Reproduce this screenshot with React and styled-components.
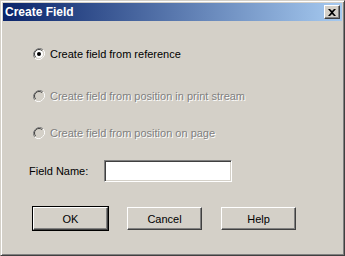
import React from 'react';
import styled, { createGlobalStyle } from 'styled-components';

const GlobalStyle = createGlobalStyle`
  html, body { margin: 0; padding: 0; background: #d4d0c8; }
  body { font-family: "Liberation Sans", Arial, sans-serif; font-size: 11px; }
`;

const Window = styled.div`
  box-sizing: border-box;
  width: 345px;
  height: 256px;
  background: #d4d0c8;
  border-top: 1px solid #d4d0c8;
  border-left: 1px solid #d4d0c8;
  border-right: 1px solid #404040;
  border-bottom: 1px solid #404040;
  box-shadow: inset 1px 1px 0 #ffffff, inset -1px -1px 0 #808080;
  padding: 2px;
  display: flex;
  flex-direction: column;
`;

const TitleBar = styled.div`
  height: 18px;
  background: linear-gradient(to right, #0a246a, #a6caf0);
  display: flex;
  align-items: center;
  justify-content: space-between;
  padding: 0 2px 0 2px;
`;

const Title = styled.span`
  color: #ffffff;
  font-weight: bold;
  font-size: 12px;
`;

const CloseButton = styled.div`
  box-sizing: border-box;
  width: 16px;
  height: 14px;
  background: #d4d0c8;
  border-top: 1px solid #ffffff;
  border-left: 1px solid #ffffff;
  border-right: 1px solid #404040;
  border-bottom: 1px solid #404040;
  box-shadow: inset -1px -1px 0 #808080;
  display: flex;
  align-items: center;
  justify-content: center;
`;

const Body = styled.div`
  display: flex;
  flex-direction: column;
  padding: 0 0 0 30px;
`;

const RadioRow = styled.label`
  display: flex;
  align-items: center;
  gap: 5px;
  height: 14px;
  margin-top: ${p => p.$top}px;
  color: ${p => (p.$disabled ? '#808080' : '#000000')};
  text-shadow: ${p => (p.$disabled ? '1px 1px 0 #ffffff' : 'none')};
`;

const FieldRow = styled.div`
  display: flex;
  align-items: center;
  margin-top: 20px;
`;

const FieldLabel = styled.span`
  width: 75px;
  margin-left: -4px;
`;

const TextInput = styled.div`
  box-sizing: border-box;
  width: 128px;
  height: 22px;
  background: #ffffff;
  border-top: 1px solid #808080;
  border-left: 1px solid #808080;
  border-right: 1px solid #ffffff;
  border-bottom: 1px solid #ffffff;
  box-shadow: inset 1px 1px 0 #404040, inset -1px -1px 0 #d4d0c8;
`;

const ButtonRow = styled.div`
  display: flex;
  gap: 19px;
  margin-top: 25px;
`;

const Button = styled.div`
  box-sizing: border-box;
  width: 75px;
  height: 23px;
  display: flex;
  align-items: center;
  justify-content: center;
  background: #d4d0c8;
  border-top: 1px solid #ffffff;
  border-left: 1px solid #ffffff;
  border-right: 1px solid #404040;
  border-bottom: 1px solid #404040;
  box-shadow: inset -1px -1px 0 #808080;
  ${p => p.$default && `
    outline: 1px solid #000000;
  `}
`;

function Radio({ checked, disabled }) {
  return (
    <svg width="12" height="12" viewBox="0 0 12 12">
      <path d="M10.2 1.8 A6 6 0 0 0 1.8 10.2" fill="none" stroke="#808080" strokeWidth="1" />
      <path d="M1.8 10.2 A6 6 0 0 0 10.2 1.8" fill="none" stroke="#ffffff" strokeWidth="1" />
      <circle cx="6" cy="6" r="4.5" fill={disabled ? '#d4d0c8' : '#ffffff'} />
      <path d="M9.2 2.8 A4.5 4.5 0 0 0 2.8 9.2" fill="none" stroke="#404040" strokeWidth="1" />
      <path d="M2.8 9.2 A4.5 4.5 0 0 0 9.2 2.8" fill="none" stroke="#d4d0c8" strokeWidth="1" />
      {checked && <circle cx="6" cy="6" r="2" fill="#000000" />}
    </svg>
  );
}

export default function App() {
  return (
    <Window>
      <GlobalStyle />
      <TitleBar>
        <Title>Create Field</Title>
        <CloseButton>
          <svg width="8" height="7" viewBox="0 0 8 7">
            <path d="M0 0 L2 0 L4 2 L6 0 L8 0 L5 3.5 L8 7 L6 7 L4 5 L2 7 L0 7 L3 3.5 Z" fill="#000" />
          </svg>
        </CloseButton>
      </TitleBar>
      <Body>
        <RadioRow $top={26}>
          <Radio checked />
          <span>Create field from reference</span>
        </RadioRow>
        <RadioRow $top={28} $disabled>
          <Radio disabled />
          <span>Create field from position in print stream</span>
        </RadioRow>
        <RadioRow $top={23} $disabled>
          <Radio disabled />
          <span>Create field from position on page</span>
        </RadioRow>
        <FieldRow>
          <FieldLabel>Field Name:</FieldLabel>
          <TextInput />
        </FieldRow>
        <ButtonRow>
          <Button $default>OK</Button>
          <Button>Cancel</Button>
          <Button>Help</Button>
        </ButtonRow>
      </Body>
    </Window>
  );
}
